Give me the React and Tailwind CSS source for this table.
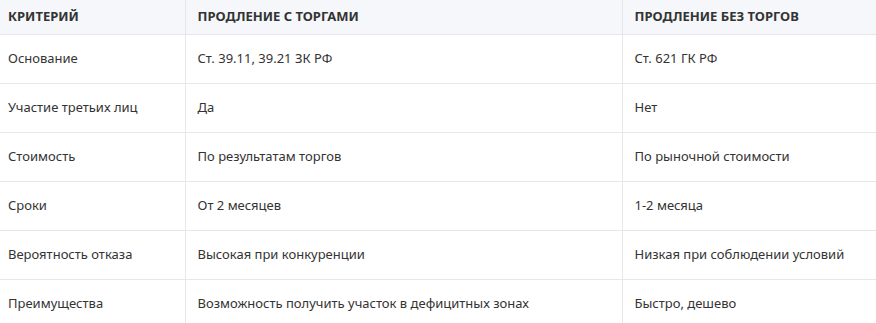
import React from 'react';

const rows = [
  ['Основание', 'Ст. 39.11, 39.21 ЗК РФ', 'Ст. 621 ГК РФ'],
  ['Участие третьих лиц', 'Да', 'Нет'],
  ['Стоимость', 'По результатам торгов', 'По рыночной стоимости'],
  ['Сроки', 'От 2 месяцев', '1-2 месяца'],
  ['Вероятность отказа', 'Высокая при конкуренции', 'Низкая при соблюдении условий'],
  ['Преимущества', 'Возможность получить участок в дефицитных зонах', 'Быстро, дешево'],
];

const App = () => {
  return (
    <div className="w-[876px] bg-white" style={{ fontFamily: '"Noto Sans", "Open Sans", sans-serif' }}>
      <table className="w-full border-collapse table-fixed text-[13px] text-[#333]">
        <colgroup>
          <col className="w-[185px]" />
          <col className="w-[437px]" />
          <col />
        </colgroup>
        <thead>
          <tr className="bg-[#f5f7fa] h-[34px]">
            <th className="text-left font-bold uppercase pl-2 pr-3 border-b border-r border-[#e5e7eb]">Критерий</th>
            <th className="text-left font-bold uppercase px-3 border-b border-r border-[#e5e7eb]">Продление с торгами</th>
            <th className="text-left font-bold uppercase px-3 border-b border-[#e5e7eb]">Продление без торгов</th>
          </tr>
        </thead>
        <tbody>
          {rows.map((r, i) => (
            <tr key={i} className="h-[49px]">
              <td className="pl-2 pr-3 border-b border-r border-[#e5e7eb]">{r[0]}</td>
              <td className="px-3 border-b border-r border-[#e5e7eb]">{r[1]}</td>
              <td className="px-3 border-b border-[#e5e7eb]">{r[2]}</td>
            </tr>
          ))}
        </tbody>
      </table>
    </div>
  );
};

export default App;
